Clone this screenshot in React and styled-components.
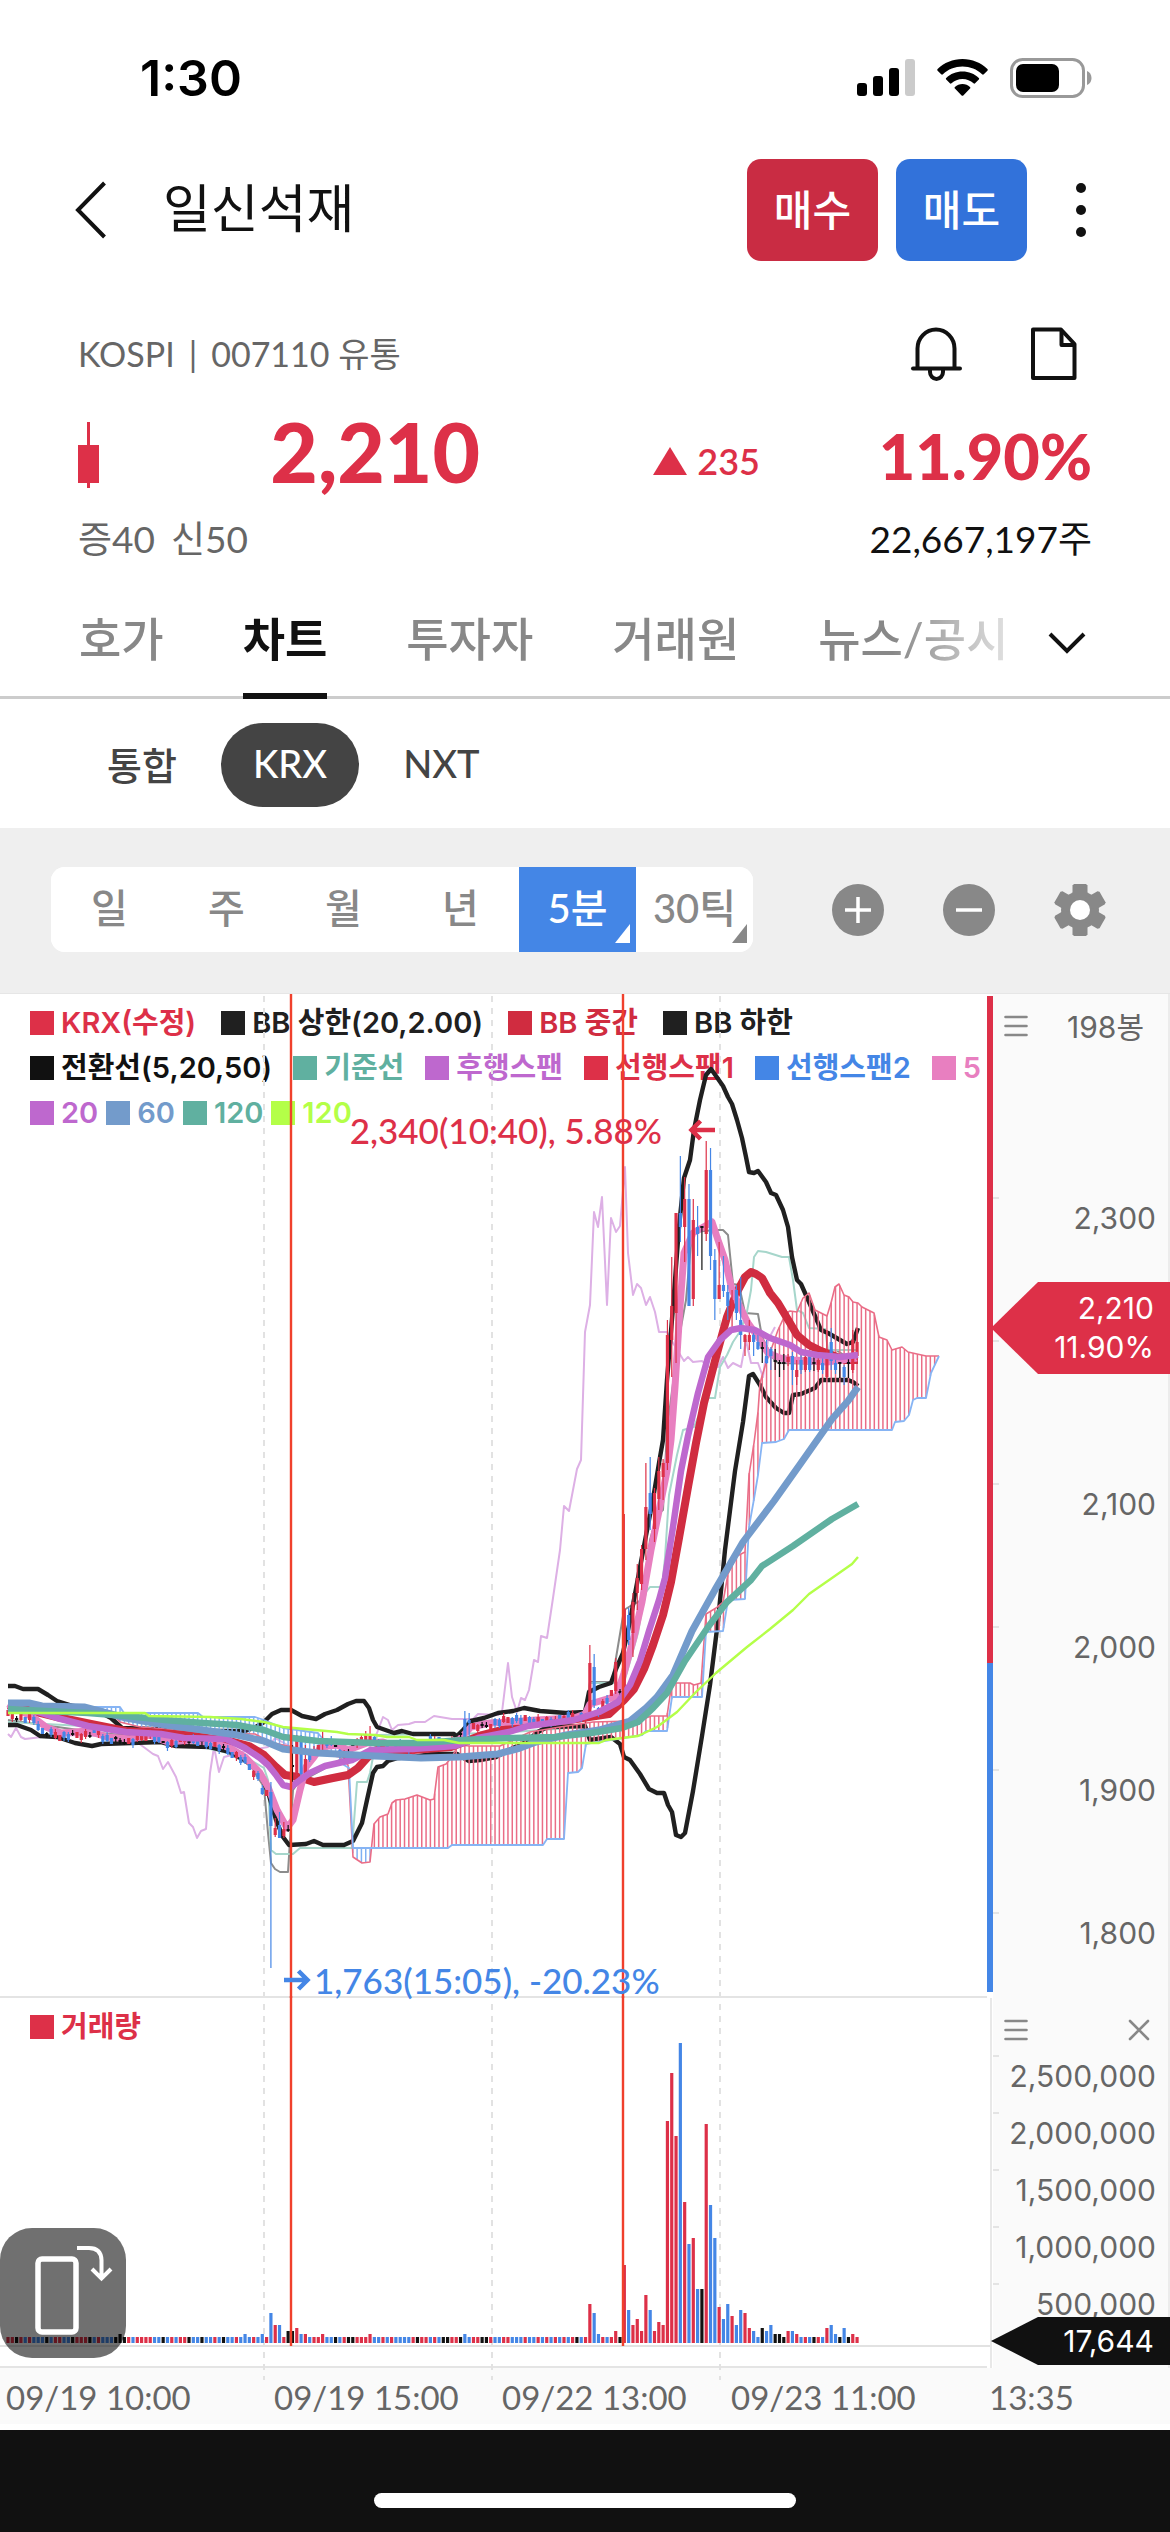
import React, { useState } from "react";
import styled, { createGlobalStyle } from "styled-components";

const RED = "#dd3048";
const BLUE = "#4486e6";
const BLACK = "#111111";
const COLORS = { r: RED, b: BLUE, k: BLACK };

const FIRST_X = 8;
const STEP = 4.31;
const BAR_COUNT = 198;
const barX = (i) => FIRST_X + i * STEP;

const tabs = ["호가", "차트", "투자자", "거래원", "뉴스/공시"];
const exchanges = ["통합", "KRX", "NXT"];
const periods = [
  { label: "일" },
  { label: "주" },
  { label: "월" },
  { label: "년" },
  { label: "5분", more: true },
  { label: "30틱", more: true },
];

const legendRows = [
  {
    gap: 25,
    items: [
      ["KRX(수정)", RED],
      ["BB 상한(20,2.00)", "#202020"],
      ["BB 중간", "#d02c40"],
      ["BB 하한", "#202020"],
    ],
  },
  {
    gap: 21,
    items: [
      ["전환선(5,20,50)", BLACK],
      ["기준선", "#60b0a0"],
      ["후행스팬", "#be68ce"],
      ["선행스팬1", RED],
      ["선행스팬2", BLUE],
      ["5", "#e87fc0"],
    ],
  },
  {
    gap: 8,
    items: [
      ["20", "#be68ce"],
      ["60", "#739bcb"],
      ["120", "#60b0a0"],
      ["120", "#b4ff48"],
    ],
  },
];

// the 2,200 line is where the current price flag sits, so it has no label
const priceTicks = ["2,300", "", "2,100", "2,000", "1,900", "1,800"];
const volumeTicks = ["2,500,000", "2,000,000", "1,500,000", "1,000,000", "500,000"];
const timeLabels = ["09/19 10:00", "09/19 15:00", "09/22 13:00", "09/23 11:00", "13:35"];
const gridLines = [264, 492, 720];
const markers = [291, 623];

// "x,y x,y ..." -> [[x, y], ...]
const parse = (text) => text.trim().split(/\s+/).map((p) => p.split(",").map(Number));

const valueAt = (points, x) => {
  for (let i = 1; i < points.length; i++) {
    if (x <= points[i][0]) {
      const [x0, y0] = points[i - 1];
      const [x1, y1] = points[i];
      return x1 === x0 ? y1 : y0 + ((y1 - y0) * (x - x0)) / (x1 - x0);
    }
  }
  return points[points.length - 1][1];
};

const bbUpper =
  "8,1686 15,1686 23,1689 38,1689 48,1695 57,1701 73,1706 94,1709 111,1718 122,1728 153,1729 165,1728 207,1731 245,1731 254,1728 264,1722 272,1714 281,1710 291,1710 302,1716 316,1719 325,1714 337,1710 348,1704 356,1701 364,1701 369,1708 373,1720 377,1727 394,1733 402,1731 413,1734 454,1734 456,1737 463,1730 471,1721 484,1718 498,1713 513,1711 524,1708 540,1711 566,1713 585,1712 589,1692 599,1687 611,1683 616,1669 623,1653 630,1621 638,1578 644,1546 653,1499 659,1463 663,1440 667,1380 673,1307 679,1227 684,1178 690,1160 694,1130 700,1100 706,1075 711,1069 716,1076 723,1086 728,1097 732,1104 737,1120 742,1138 746,1157 749,1172 754,1173 758,1171 766,1182 771,1193 776,1195 783,1210 788,1227 792,1257 797,1280 801,1284 809,1302 821,1330 828,1333 840,1340 847,1344 853,1342 858,1328";
const bbLower =
  "8,1725 17,1725 31,1730 40,1736 57,1737 75,1743 92,1746 101,1744 161,1742 176,1746 210,1747 230,1752 245,1760 260,1773 268,1792 276,1820 283,1837 289,1845 306,1844 314,1841 323,1845 344,1845 353,1841 362,1823 367,1800 373,1773 377,1767 383,1766 388,1761 398,1758 413,1757 432,1754 457,1754 469,1761 480,1760 496,1757 513,1748 524,1743 538,1732 547,1727 585,1726 590,1740 611,1737 620,1744 624,1757 630,1760 640,1774 649,1789 657,1793 664,1793 668,1805 672,1812 676,1835 681,1837 685,1833 693,1791 702,1736 710,1685 718,1621 725,1550 735,1471 743,1422 749,1376 753,1374 760,1385 766,1397 776,1408 784,1413 789,1413 793,1395 801,1394 815,1388 821,1380 848,1380 853,1382 858,1386";
const bbMiddle =
  "8,1705 57,1717 96,1725 126,1731 161,1733 184,1735 230,1741 249,1746 264,1755 276,1767 285,1775 298,1777 314,1782 333,1778 348,1775 358,1768 367,1758 377,1750 413,1750 451,1747 482,1735 509,1728 536,1723 570,1720 589,1717 609,1714 624,1700 634,1689 644,1669 653,1645 663,1615 671,1582 679,1538 688,1487 696,1443 704,1403 716,1357 727,1317 737,1292 745,1277 751,1272 756,1274 762,1278 770,1293 778,1303 790,1323 797,1335 809,1345 821,1351 832,1355 845,1360 858,1360";
const ma5 =
  "8,1704 34,1718 46,1727 61,1733 88,1731 107,1737 130,1739 149,1735 168,1742 191,1740 214,1743 230,1748 245,1757 260,1773 268,1787 277,1810 287,1828 293,1820 300,1790 306,1767 314,1757 321,1747 337,1745 348,1750 367,1743 383,1742 398,1748 421,1747 444,1743 459,1740 471,1727 490,1723 509,1722 536,1720 574,1718 585,1714 590,1704 607,1699 616,1697 624,1673 634,1637 642,1602 651,1550 659,1511 667,1471 671,1440 675,1387 680,1307 684,1253 693,1233 707,1225 712,1222 718,1240 725,1260 732,1290 740,1307 748,1323 758,1337 768,1353 780,1358 793,1360 827,1362 857,1358";
const ma20 =
  "8,1707 38,1712 57,1718 88,1726 126,1732 161,1734 184,1738 226,1739 245,1748 260,1758 268,1765 276,1775 283,1785 291,1787 300,1780 310,1773 325,1766 352,1760 371,1750 413,1749 455,1746 478,1738 509,1732 528,1726 574,1720 599,1712 618,1702 630,1685 640,1661 649,1631 659,1600 665,1578 673,1527 681,1471 688,1436 698,1393 708,1357 720,1340 731,1330 741,1328 755,1330 770,1338 790,1345 801,1352 817,1355 840,1357 858,1355";
const ma60 =
  "8,1703 29,1703 42,1706 84,1707 126,1718 165,1725 203,1730 237,1735 264,1741 283,1749 318,1753 375,1756 421,1758 459,1757 498,1754 520,1748 536,1742 566,1735 599,1730 630,1721 646,1708 657,1697 673,1675 692,1631 716,1588 743,1542 774,1501 801,1463 832,1419 848,1401 858,1387";
const ma120 =
  "8,1709 46,1711 88,1713 126,1716 165,1720 203,1723 237,1725 264,1730 283,1737 318,1741 375,1743 421,1743 463,1740 513,1738 555,1737 591,1733 622,1728 638,1722 653,1708 667,1693 685,1661 708,1627 727,1602 751,1580 762,1566 793,1546 832,1519 858,1504";
const maLong =
  "8,1713 145,1713 149,1716 210,1717 241,1719 264,1722 283,1727 337,1732 348,1734 375,1735 387,1737 409,1737 417,1740 444,1740 459,1743 599,1743 606,1740 638,1736 657,1727 677,1712 696,1692 716,1673 747,1647 770,1629 793,1610 809,1594 832,1578 852,1564 858,1557";
const lagging =
  "8,1734 11,1737 16,1728 21,1737 25,1739 42,1737 77,1735 115,1737 134,1740 145,1748 153,1754 158,1756 163,1769 168,1762 176,1777 181,1793 184,1792 189,1823 193,1827 197,1838 201,1831 206,1829 210,1773 214,1747 219,1772 224,1757 232,1755 241,1752 268,1747 275,1738 300,1752 344,1757 367,1753 377,1733 383,1717 388,1720 392,1730 398,1725 409,1724 415,1722 425,1722 434,1716 452,1719 473,1719 478,1714 498,1715 502,1712 508,1663 512,1697 517,1712 521,1698 525,1700 529,1690 534,1660 538,1662 541,1636 547,1638 553,1598 560,1550 564,1506 569,1511 577,1469 581,1460 585,1332 590,1305 594,1212 598,1227 602,1197 607,1305 611,1218 616,1232 620,1226 625,1167 628,1253 633,1295 637,1284 641,1288 646,1305 650,1297 655,1312 659,1332 667,1332 673,1343 684,1361 688,1357 693,1362 702,1361 710,1368 718,1367 723,1357 728,1368 733,1363 741,1367 746,1340 751,1363 758,1363 763,1377 768,1340 775,1327";
const baseLine =
  "8,1722 120,1728 245,1757 264,1768 268,1780 271,1850 276,1854 293,1854 300,1848 352,1848 357,1782 367,1782 370,1773 373,1757 377,1735 498,1733 585,1727 590,1683 624,1683 638,1633 641,1615 646,1592 650,1587 662,1587 665,1558 669,1495 677,1455 683,1430 694,1427 706,1398 715,1398 720,1367 727,1355 733,1342 739,1333 746,1317 751,1290 754,1257 758,1251 766,1252 782,1257 789,1257 793,1280 797,1310 803,1313 809,1328 825,1329 828,1350 858,1350";
const conversionLine =
  "8,1720 100,1733 210,1743 250,1765 264,1787 268,1833 271,1863 275,1869 280,1872 288,1872 290,1840 293,1790 298,1783 340,1760 400,1745 456,1742 470,1722 585,1716 590,1682 612,1682 624,1610 632,1605 642,1600 650,1540 657,1515 663,1510 667,1430 676,1360 681,1327 686,1300 692,1232 716,1230 723,1230 728,1235 733,1284 739,1285 745,1313 758,1314 762,1337 772,1357 778,1363 826,1364 828,1350 836,1350 844,1355 858,1358";
const spanA =
  "8,1704 88,1709 110,1711 120,1722 140,1727 165,1729 203,1733 255,1734 270,1742 318,1753 340,1757 348,1765 353,1857 362,1863 370,1862 374,1824 380,1817 388,1814 392,1803 396,1800 405,1799 417,1795 430,1800 434,1799 438,1767 446,1764 452,1757 458,1745 470,1746 500,1746 513,1740 530,1732 560,1727 593,1722 630,1721 646,1718 651,1716 667,1716 671,1689 675,1683 690,1683 694,1685 701,1683 706,1614 716,1608 723,1602 728,1574 737,1556 745,1552 749,1475 754,1443 758,1412 760,1383 766,1363 772,1347 778,1330 786,1313 790,1311 797,1312 803,1298 809,1293 815,1310 827,1316 831,1303 835,1287 839,1284 844,1295 849,1297 853,1302 858,1303 862,1307 874,1313 879,1337 887,1340 892,1350 902,1347 908,1352 926,1356 939,1356";
const spanB =
  "8,1704 88,1707 120,1707 124,1713 198,1713 203,1717 255,1717 264,1720 283,1728 318,1733 322,1738 340,1745 344,1765 349,1768 353,1848 448,1848 452,1845 543,1845 547,1839 564,1839 568,1773 578,1772 582,1768 586,1744 591,1743 630,1737 642,1735 646,1731 667,1731 672,1697 702,1697 706,1632 723,1631 728,1600 745,1599 749,1527 754,1499 758,1475 762,1443 776,1442 784,1439 789,1430 892,1430 895,1422 904,1421 909,1415 913,1400 917,1398 926,1398 931,1373 939,1356";

// up / down / flat for every bar, oldest first
const barColors =
  "rrkrbrbbbkbrrbbkrrrkbrbbbkkkrbrrrrbbkbrbrrkbbkbbrbkbbrbbbrbb" +
  "rbrbrkkrbrbrrrbbkbrkkrrrrbbrbrbbbbrkrrbrbkkrrkbbrrkkrbbrrbbb" +
  "rbbrbrbrbrbrkbrrbbrbrrkrbrrrrbrrr" +
  "rrrbrbrbkrbbrbbrbbrrbbkbbkkkrbrbrbkrbrbbkbkrr";

const closePath = parse(
  "8,1715 20,1718 35,1720 42,1732 60,1736 90,1735 97,1730 105,1739 130,1742 150,1734 160,1742 175,1744 185,1739 200,1743 215,1745 230,1752 243,1760 250,1768 258,1777 262,1790 267,1795 309,1760 314,1752 322,1740 335,1745 345,1757 350,1750 362,1737 375,1742 390,1752 400,1745 415,1752 430,1740 450,1744 460,1738 465,1722 475,1728 490,1725 510,1719 530,1720 550,1722 570,1716 586,1717 600,1708 616,1690"
);

// index: [high, body top, body bottom, low]
const bigCandles = {
  61: [1782, 1792, 1826, 1968], 62: [1818, 1828, 1835, 1837], 63: [1812, 1825, 1838, 1838], 64: [1822, 1829, 1836, 1838],
  65: [1825, 1829, 1831, 1832], 66: [1745, 1765, 1767, 1787], 67: [1735, 1737, 1773, 1776], 68: [1735, 1737, 1774, 1776],
  69: [1745, 1759, 1773, 1775], 73: [1730, 1738, 1744, 1752], 84: [1726, 1735, 1742, 1746], 106: [1711, 1719, 1740, 1744],
  107: [1713, 1720, 1723, 1745], 135: [1645, 1663, 1712, 1714], 136: [1654, 1667, 1705, 1708], 141: [1658, 1662, 1691, 1694],
  143: [1514, 1609, 1690, 1700], 144: [1608, 1615, 1640, 1645], 145: [1593, 1602, 1633, 1657], 146: [1564, 1578, 1593, 1610],
  147: [1545, 1549, 1584, 1590], 148: [1463, 1507, 1549, 1560], 149: [1457, 1493, 1514, 1530], 150: [1488, 1493, 1529, 1542],
  151: [1457, 1471, 1499, 1510], 152: [1459, 1463, 1477, 1500], 153: [1320, 1335, 1463, 1470], 154: [1257, 1306, 1340, 1377],
  155: [1213, 1213, 1313, 1363], 156: [1156, 1213, 1227, 1242], 157: [1177, 1199, 1227, 1262], 158: [1184, 1199, 1306, 1306],
  159: [1199, 1220, 1299, 1306], 160: [1206, 1227, 1234, 1256], 161: [1226, 1226, 1228, 1270], 162: [1141, 1170, 1234, 1241],
  163: [1148, 1170, 1256, 1270], 164: [1249, 1260, 1299, 1320], 165: [1242, 1285, 1299, 1299], 166: [1256, 1285, 1291, 1297],
  167: [1285, 1292, 1306, 1320], 168: [1290, 1300, 1310, 1327], 169: [1285, 1290, 1313, 1320], 170: [1277, 1320, 1335, 1349],
  171: [1334, 1335, 1342, 1356], 172: [1320, 1335, 1342, 1350], 173: [1333, 1335, 1342, 1356], 174: [1335, 1342, 1349, 1350],
  175: [1342, 1347, 1349, 1363], 176: [1340, 1356, 1363, 1364], 177: [1347, 1349, 1356, 1370], 178: [1349, 1360, 1362, 1370],
  179: [1360, 1362, 1364, 1377], 180: [1354, 1362, 1364, 1370], 181: [1354, 1357, 1362, 1366], 182: [1352, 1356, 1370, 1385],
  183: [1360, 1370, 1377, 1385], 184: [1354, 1360, 1370, 1374], 185: [1354, 1357, 1370, 1372], 186: [1352, 1356, 1370, 1372],
  187: [1354, 1362, 1364, 1371], 188: [1358, 1360, 1370, 1372], 189: [1358, 1363, 1370, 1374], 190: [1330, 1357, 1377, 1379],
  191: [1328, 1342, 1361, 1370], 192: [1356, 1363, 1370, 1374], 193: [1362, 1362, 1364, 1378], 194: [1365, 1367, 1377, 1385],
  195: [1356, 1362, 1364, 1378], 196: [1330, 1340, 1370, 1373], 197: [1328, 1342, 1356, 1360],
};

const bigVolumes = {
  26: 9, 55: 9, 59: 9, 61: 30, 62: 18, 63: 18, 65: 12, 66: 12, 67: 15, 68: 9, 69: 9, 73: 9, 84: 9, 106: 9,
  135: 39, 136: 30, 137: 9, 141: 12, 143: 78, 144: 33, 145: 18, 146: 24, 147: 12, 148: 48, 149: 33, 150: 12,
  151: 21, 152: 18, 153: 222, 154: 270, 155: 207, 156: 300, 157: 141, 158: 99, 159: 105, 160: 54, 161: 54,
  162: 219, 163: 138, 164: 105, 165: 36, 166: 24, 167: 39, 168: 27, 169: 18, 170: 33, 171: 30, 172: 15,
  173: 12, 175: 15, 176: 12, 177: 18, 178: 9, 179: 9, 181: 12, 182: 12, 183: 9, 190: 15, 191: 18, 192: 9,
  194: 15, 196: 9,
};

const candles = Array.from({ length: BAR_COUNT }, (_, i) => {
  const color = COLORS[barColors[i]];
  if (bigCandles[i]) return { x: barX(i), color, v: bigCandles[i] };
  const y = Math.round(valueAt(closePath, barX(i))) + ((i * 7) % 5) - 2;
  const half = barColors[i] === "k" ? 1 : 3;
  const wick = (i * 5) % 4;
  return { x: barX(i), color, v: [y - half - wick, y - half, y + half, y + half + ((i * 3) % 4)] };
});

const spanAPoints = parse(spanA);
const spanBPoints = parse(spanB);
const cloud = Array.from({ length: 197 }, (_, i) => {
  const x = barX(i + 19);
  const a = valueAt(spanAPoints, x);
  const b = valueAt(spanBPoints, x);
  return { x, a, b, color: a < b ? "#ea6d87" : "#7fb0f2" };
});

const GridLines = ({ from, to }) => (
  <g>
    {gridLines.map((x) => (
      <path key={x} d={`M${x} ${from}V${to}`} stroke="#e2e2e2" strokeWidth="2" strokeDasharray="6 6" />
    ))}
  </g>
);

const Markers = ({ from, to }) => (
  <g>
    {markers.map((x) => (
      <path key={x} d={`M${x} ${from}V${to}`} stroke="#f0402c" strokeWidth="2.4" />
    ))}
  </g>
);

const PriceChart = () => (
  <ChartSvg viewBox="0 994 987 1002" preserveAspectRatio="none" aria-hidden="true">
    <GridLines from={996} to={1996} />
    <g fill="none" strokeLinejoin="round">
      <polyline points={lagging} stroke="#ddb0e5" strokeWidth="2" />
      <polyline points={conversionLine} stroke="#8c8c8c" strokeWidth="2" />
      <polyline points={baseLine} stroke="#a6d6cb" strokeWidth="2" />
      <polyline points={bbUpper} stroke="#202020" strokeWidth="4.4" />
      <polyline points={bbLower} stroke="#202020" strokeWidth="4.4" />
    </g>
    <g strokeWidth="1.5">
      {cloud.map((c) => (
        <path key={c.x} d={`M${c.x} ${c.a}V${c.b}`} stroke={c.color} />
      ))}
    </g>
    <g fill="none" strokeLinejoin="round">
      <polyline points={spanA} stroke="#ea6d87" strokeWidth="1.6" />
      <polyline points={spanB} stroke="#86b4f4" strokeWidth="1.8" />
      <polyline points={bbMiddle} stroke="#d02c40" strokeWidth="8" />
      <polyline points={ma5} stroke="#e87fc0" strokeWidth="7" />
    </g>
    <g>
      {candles.map(({ x, color, v }) => (
        <g key={x} stroke={color}>
          <path d={`M${x} ${v[0]}V${v[3]}`} strokeWidth="1.2" />
          <path d={`M${x} ${v[1]}V${v[2]}`} strokeWidth="3.2" />
        </g>
      ))}
    </g>
    <g fill="none" strokeLinejoin="round">
      <polyline points={ma20} stroke="#be68ce" strokeWidth="6.5" />
      <polyline points={ma60} stroke="#739bcb" strokeWidth="7" />
      <polyline points={ma120} stroke="#60b0a0" strokeWidth="6.5" />
      <polyline points={maLong} stroke="#b4ff48" strokeWidth="2.4" />
    </g>
    <Markers from={994} to={1998} />
  </ChartSvg>
);

const VolumeChart = () => (
  <ChartSvg viewBox="0 1998 987 368" preserveAspectRatio="none" aria-hidden="true">
    <GridLines from={2004} to={2380} />
    <path d="M0 2346H990" stroke="#e2e2e2" strokeWidth="2" />
    {candles.map(({ x, color }, i) => (
      <path key={x} d={`M${x} 2343v-${bigVolumes[i] || 6}`} stroke={color} strokeWidth="3.2" />
    ))}
    <Markers from={1996} to={2346} />
  </ChartSvg>
);

const MenuIcon = () => (
  <svg width="24" height="22" viewBox="0 0 24 22" stroke="#888" strokeWidth="2.6" strokeLinecap="round">
    <path d="M1.5 2h21M1.5 11h21M1.5 20h21" />
  </svg>
);

const GearIcon = () => (
  <svg width="54" height="54" viewBox="-27 -27 54 54" fill="#888">
    <circle r="19" />
    {[0, 60, 120].map((angle) => (
      <path key={angle} d="M-6-26H6l1.500 1.500v49L6 26H-6l-1.500-1.500v-49z" transform={`rotate(${angle})`} />
    ))}
    <circle r="10" fill="#fff" />
  </svg>
);

const App = () => {
  const [tab, setTab] = useState("차트");
  const [exchange, setExchange] = useState("KRX");
  const [period, setPeriod] = useState("5분");

  return (
    <Page>
      <GlobalStyle />
      <StatusBar>
        <Clock>1:30</Clock>
        <StatusIcons>
          <svg width="58" height="38" viewBox="0 0 58 38">
            <rect x="0" y="24" width="10" height="13" rx="3" />
            <rect x="16" y="17" width="10" height="20" rx="3" />
            <rect x="32" y="9" width="10" height="28" rx="3" />
            <rect x="48" y="0" width="10" height="37" rx="3" fill="#cbcbcb" />
          </svg>
          <svg width="51" height="38" viewBox="0 0 51 38">
            <path d="M25.5 0C35.2 0 44 3.800 50.4 10c.5.500.5 1.200 0 1.700l-3.600 3.600c-.5.500-1.200.5-1.700 0C39.900 10.400 33 7.600 25.500 7.600S11.100 10.400 5.900 15.300c-.5.500-1.200.5-1.700 0L.6 11.700c-.5-.5-.5-1.200 0-1.700C7 3.800 15.800 0 25.500 0z" />
            <path d="M25.5 12.600c6.300 0 12 2.400 16.300 6.300.5.500.5 1.200 0 1.700l-3.700 3.700c-.4.400-1.100.5-1.600 0-2.900-2.600-6.800-4.200-11-4.200s-8.100 1.600-11 4.200c-.5.500-1.200.4-1.600 0l-3.700-3.700c-.5-.5-.5-1.200 0-1.700 4.300-3.900 10-6.300 16.300-6.300z" />
            <path d="M25.5 25.100c2.900 0 5.500 1.100 7.500 2.800.5.500.5 1.200 0 1.700l-6.700 6.800c-.5.500-1.200.5-1.700 0l-6.700-6.800c-.5-.5-.5-1.200 0-1.700 2.100-1.700 4.700-2.800 7.600-2.800z" />
          </svg>
          <svg width="82" height="40" viewBox="0 0 82 40">
            <rect x="1.5" y="1.5" width="72" height="37" rx="11" fill="none" stroke="#999" strokeWidth="3" />
            <rect x="6" y="6" width="43" height="28" rx="7" />
            <path d="M77 13c2.600.8 4.500 3.700 4.500 7s-1.900 6.200-4.500 7z" fill="#999" />
          </svg>
        </StatusIcons>
      </StatusBar>

      <Header>
        <IconButton aria-label="뒤로">
          <svg width="32" height="58" viewBox="0 0 32 58" fill="none" stroke={BLACK} strokeWidth="4">
            <path d="M29.5 2L3 29l26.500 27" />
          </svg>
        </IconButton>
        <Title>일신석재</Title>
        <TradeButton $color="#c92c43">매수</TradeButton>
        <TradeButton $color="#3272da">매도</TradeButton>
        <MoreButton aria-label="더보기">
          <svg width="22" height="56" viewBox="0 0 22 56" fill={BLACK}>
            <circle cx="11" cy="6" r="5" />
            <circle cx="11" cy="28" r="5" />
            <circle cx="11" cy="50" r="5" />
          </svg>
        </MoreButton>
      </Header>

      <MarketRow>
        <MarketInfo>
          <span>KOSPI</span>
          <span>|</span>
          <span>007110 유통</span>
        </MarketInfo>
        <MarketActions>
          <IconButton aria-label="알림">
            <svg width="52" height="56" viewBox="0 0 52 56" fill="none" stroke={BLACK} strokeWidth="4" strokeLinecap="round">
              <path d="M7.5 42V22.500a18.500 19 0 0 1 37 0V42" />
              <path d="M3 42.500h47" />
              <path d="M20 44v2a6.500 7 0 0 0 13 0v-2" />
            </svg>
          </IconButton>
          <IconButton aria-label="메모">
            <svg width="48" height="54" viewBox="0 0 48 54" fill="none" stroke={BLACK} strokeWidth="4" strokeLinejoin="round">
              <path d="M3 2.500h28L44.500 17v34H3z" />
              <path d="M31.5 3v15h13" />
            </svg>
          </IconButton>
        </MarketActions>
      </MarketRow>

      <PriceRow>
        <PriceCell>
          <svg width="22" height="66" viewBox="0 0 22 66" fill={RED}>
            <rect x="9" y="0" width="3" height="66" />
            <rect x="0" y="23" width="21" height="38" />
          </svg>
          <Price>2,210</Price>
        </PriceCell>
        <Change>
          <svg width="34" height="28" viewBox="0 0 34 28" fill={RED}>
            <path d="M17 0l17 28H0z" />
          </svg>
          235
        </Change>
        <Rate>11.90%</Rate>
      </PriceRow>

      <MarginRow>
        <Margins>
          <span>증40</span>
          <span>신50</span>
        </Margins>
        <TotalVolume>22,667,197주</TotalVolume>
      </MarginRow>

      <TabBar>
        <TabList>
          {tabs.map((name) => (
            <Tab key={name} $active={name === tab} onClick={() => setTab(name)}>
              {name}
            </Tab>
          ))}
        </TabList>
        <IconButton aria-label="전체 메뉴">
          <svg width="40" height="24" viewBox="0 0 40 24" fill="none" stroke={BLACK} strokeWidth="4">
            <path d="M3 3l17 17L37 3" />
          </svg>
        </IconButton>
      </TabBar>

      <ExchangeBar>
        {exchanges.map((name) => (
          <ExchangeButton key={name} $active={name === exchange} onClick={() => setExchange(name)}>
            {name}
          </ExchangeButton>
        ))}
      </ExchangeBar>

      <Toolbar>
        <PeriodGroup>
          {periods.map(({ label, more }) => (
            <PeriodButton key={label} $active={label === period} $more={more} onClick={() => setPeriod(label)}>
              {label}
            </PeriodButton>
          ))}
        </PeriodGroup>
        <Tools>
          <IconButton aria-label="확대">
            <svg width="54" height="54" viewBox="0 0 54 54">
              <circle cx="27" cy="27" r="26" fill="#888" />
              <path d="M14 27h26M27 14v26" stroke="#fff" strokeWidth="3.5" />
            </svg>
          </IconButton>
          <IconButton aria-label="축소">
            <svg width="54" height="54" viewBox="0 0 54 54">
              <circle cx="27" cy="27" r="26" fill="#888" />
              <path d="M14 27h26" stroke="#fff" strokeWidth="3.5" />
            </svg>
          </IconButton>
          <IconButton aria-label="설정">
            <GearIcon />
          </IconButton>
        </Tools>
      </Toolbar>

      <Pane>
        <Plot $height={1002}>
          <Legend>
            {legendRows.map((row, i) => (
              <LegendRow key={i} $gap={row.gap}>
                {row.items.map(([name, color], j) => (
                  <LegendItem key={j} $color={color}>
                    {name}
                  </LegendItem>
                ))}
              </LegendRow>
            ))}
          </Legend>
          <PriceChart />
          <HighNote>
            2,340(10:40), 5.88%
            <svg width="27" height="22" viewBox="0 0 27 22" fill="none" stroke={RED} strokeWidth="4.5">
              <path d="M27 11H4M12.5 2L3.500 11l9 9" />
            </svg>
          </HighNote>
          <LowNote>
            <svg width="27" height="22" viewBox="0 0 27 22" fill="none" stroke={BLUE} strokeWidth="4.5">
              <path d="M0 11h23M14.5 2l9 9-9 9" />
            </svg>
            1,763(15:05), -20.23%
          </LowNote>
        </Plot>
        <RangeBar />
        <Axis>
          <AxisHead $height={203}>
            <IconButton aria-label="차트 메뉴">
              <MenuIcon />
            </IconButton>
            <BarTotal>198봉</BarTotal>
          </AxisHead>
          {priceTicks.map((tick, i) => (
            <Tick key={i} $height={143}>
              {tick}
            </Tick>
          ))}
          <PriceFlag>
            <span>2,210</span>
            <span>11.90%</span>
          </PriceFlag>
        </Axis>
      </Pane>

      <Pane>
        <Plot $height={368}>
          <Legend>
            <LegendRow $gap={25}>
              <LegendItem $color={RED}>거래량</LegendItem>
            </LegendRow>
          </Legend>
          <VolumeChart />
          <RotateButton aria-label="가로 화면">
            <svg width="126" height="130" viewBox="0 0 126 130" fill="none" stroke="#fff" strokeWidth="5.5">
              <rect x="38" y="31" width="38" height="73" rx="4" />
              <path d="M77 20h12q12 0 12.500 12v18M92 41l9.500 9.500L111 41" strokeWidth="4" />
            </svg>
          </RotateButton>
        </Plot>
        <AxisLine />
        <Axis>
          <AxisHead $height={57}>
            <IconButton aria-label="거래량 메뉴">
              <MenuIcon />
            </IconButton>
            <IconButton aria-label="닫기">
              <svg width="22" height="22" viewBox="0 0 22 22" stroke="#888" strokeWidth="2.6" strokeLinecap="round">
                <path d="M2 2l18 18M20 2L2 20" />
              </svg>
            </IconButton>
          </AxisHead>
          {volumeTicks.map((tick) => (
            <Tick key={tick} $height={57}>
              {tick}
            </Tick>
          ))}
          <VolumeFlag>17,644</VolumeFlag>
        </Axis>
      </Pane>

      <TimeAxis>
        {timeLabels.map((label) => (
          <span key={label}>{label}</span>
        ))}
      </TimeAxis>

      <HomeArea>
        <HomeIndicator />
      </HomeArea>
    </Page>
  );
};

export default App;

const GlobalStyle = createGlobalStyle`
  * {
    box-sizing: border-box;
  }
  body {
    margin: 0;
    background: #fff;
    font-family: Lato, "Noto Sans CJK KR", sans-serif;
    color: #111;
  }
  button {
    font: inherit;
    color: inherit;
    border: none;
    background: none;
    padding: 0;
    cursor: pointer;
  }
  svg {
    display: block;
  }
`;

const Page = styled.main`
  display: flex;
  flex-direction: column;
  width: 100%;
  overflow: hidden;
`;

const StatusBar = styled.div`
  display: flex;
  align-items: center;
  justify-content: space-between;
  height: 130px;
  padding: 26px 78px 0 140px;
`;

const Clock = styled.span`
  font-family: Inter, sans-serif;
  font-size: 50px;
  font-weight: 600;
  line-height: 60px;
  color: #000;
`;

const StatusIcons = styled.div`
  display: flex;
  align-items: center;
  gap: 22px;
`;

const Header = styled.header`
  display: flex;
  align-items: center;
  height: 160px;
  padding: 0 78px 0 75px;
`;

const IconButton = styled.button`
  display: flex;
  flex: none;
`;

const Title = styled.h1`
  flex: 1;
  margin: 0 0 4px 56px;
  font-size: 52px;
  font-weight: 400;
  line-height: 72px;
`;

const TradeButton = styled.button`
  width: 131px;
  height: 102px;
  margin-left: 18px;
  padding-bottom: 6px;
  border-radius: 14px;
  background: ${(props) => props.$color};
  color: #fff;
  font-size: 42px;
  font-weight: 500;
`;

const MoreButton = styled(IconButton)`
  margin-left: 43px;
`;

const MarketRow = styled.div`
  display: flex;
  align-items: center;
  justify-content: space-between;
  height: 128px;
  padding: 0 78px;
`;

const MarketInfo = styled.div`
  display: flex;
  align-items: baseline;
  gap: 14px;
  padding-bottom: 4px;
  color: #666;
  font-size: 34px;
`;

const MarketActions = styled.div`
  display: flex;
  align-items: center;
  gap: 68px;
  margin-right: 14px;
`;

const PriceRow = styled.div`
  display: grid;
  grid-template-columns: 402fr 280fr 332fr;
  align-items: start;
  height: 72px;
  padding: 0 78px;
  color: ${RED};
  font-weight: 700;
`;

const PriceCell = styled.div`
  display: flex;
  justify-content: space-between;
  padding-top: 4px;
`;

const Price = styled.strong`
  font-size: 82px;
  line-height: 58px;
`;

const Change = styled.span`
  display: flex;
  align-items: baseline;
  justify-content: flex-end;
  gap: 10px;
  font-size: 36px;
  font-weight: 600;
  line-height: 86px;
`;

const Rate = styled.strong`
  font-size: 63px;
  line-height: 76px;
  text-align: right;
`;

const MarginRow = styled.div`
  display: flex;
  align-items: center;
  justify-content: space-between;
  height: 100px;
  padding: 0 78px 6px;
  font-size: 37px;
`;

const Margins = styled.div`
  display: flex;
  gap: 16px;
  color: #666;
`;

const TotalVolume = styled.span`
  color: #111;
`;

const TabBar = styled.nav`
  display: flex;
  align-items: center;
  height: 109px;
  padding: 0 83px 0 79px;
  border-bottom: 3px solid #ccc;
`;

const TabList = styled.div`
  display: flex;
  align-self: stretch;
  flex: 1;
  gap: 79px;
  margin-bottom: -3px;
  overflow: hidden;
  white-space: nowrap;
  mask-image: linear-gradient(to right, #000 84%, transparent 100%);
`;

const Tab = styled.button`
  flex: none;
  padding-bottom: 12px;
  border-bottom: 6px solid ${(props) => (props.$active ? BLACK : "transparent")};
  color: ${(props) => (props.$active ? BLACK : "#888")};
  font-size: 46px;
  font-weight: ${(props) => (props.$active ? 700 : 500)};
`;

const ExchangeBar = styled.div`
  display: flex;
  gap: 12px;
  padding: 24px 75px 21px;
`;

const ExchangeButton = styled.button`
  height: 84px;
  padding: 0 32px 4px;
  border-radius: 42px;
  background: ${(props) => (props.$active ? "#444" : "transparent")};
  color: ${(props) => (props.$active ? "#fff" : "#444")};
  font-size: 38px;
  font-weight: 500;
`;

const Toolbar = styled.div`
  display: flex;
  align-items: center;
  height: 166px;
  padding: 0 63px 2px 51px;
  background: #efefef;
  border-bottom: 1px solid #e6e6e6;
`;

const PeriodGroup = styled.div`
  display: grid;
  grid-template-columns: repeat(6, 1fr);
  flex: 702;
  height: 85px;
  overflow: hidden;
  border-radius: 14px;
  background: #fff;
`;

const PeriodButton = styled.button`
  padding-bottom: 8px;
  background: ${(props) => (props.$active ? BLUE : "#fff")};
  color: ${(props) => (props.$active ? "#fff" : "#888")};
  font-size: 40px;
  font-weight: 500;
  position: relative;

  &::after {
    content: "";
    display: ${(props) => (props.$more ? "block" : "none")};
    position: absolute;
    right: 6px;
    bottom: 9px;
    width: 15px;
    height: 19px;
    background: ${(props) => (props.$active ? "#fff" : "#888")};
    clip-path: polygon(100% 0, 100% 100%, 0 100%);
  }
`;

const Tools = styled.div`
  display: flex;
  flex: 354;
  justify-content: flex-end;
  gap: 57px;
`;

const Pane = styled.section`
  display: grid;
  grid-template-columns: 1fr 6px 177px;
  background: #fff;
`;

const Plot = styled.div`
  display: grid;
  position: relative;
  height: ${(props) => props.$height + 2}px;
  border-bottom: 2px solid #e4e4e4;
`;

const ChartSvg = styled.svg`
  grid-area: 1 / 1;
  width: 100%;
  height: 100%;
  overflow: visible;
  position: relative;
`;

const Legend = styled.div`
  grid-area: 1 / 1;
  padding: 6px 0 0 30px;
  overflow: hidden;
`;

const LegendRow = styled.div`
  display: flex;
  gap: ${(props) => props.$gap}px;
  height: 45px;
`;

const LegendItem = styled.span`
  display: flex;
  align-items: center;
  gap: 7px;
  color: ${(props) => props.$color};
  font-family: Inter, "Noto Sans CJK KR", sans-serif;
  font-size: 29px;
  font-weight: 600;
  line-height: 40px;
  white-space: nowrap;

  &::before {
    content: "";
    width: 24px;
    height: 24px;
    background: ${(props) => props.$color};
  }
`;

const Note = styled.div`
  display: flex;
  align-items: center;
  position: absolute;
  font-size: 35px;
  font-weight: 500;
  line-height: 42px;
  white-space: nowrap;
`;

const HighNote = styled(Note)`
  top: 115px;
  right: 272px;
  gap: 26px;
  color: ${RED};
`;

const LowNote = styled(Note)`
  top: 965px;
  left: 284px;
  gap: 3px;
  color: ${BLUE};
`;

const RangeBar = styled.div`
  margin: 2px 0 6px;
  background: linear-gradient(${RED} 67%, ${BLUE} 67%);
`;

const AxisLine = styled.div`
  width: 2px;
  margin-left: 3px;
  background: #e8e8e8;
`;

const Axis = styled.div`
  position: relative;
  min-height: 0;
  border-right: 2px solid #ececec;
  background: #fafafa;
  color: #666;
  font-family: Inter, "Noto Sans CJK KR", sans-serif;
  font-size: 30px;
`;

const AxisHead = styled.div`
  display: flex;
  align-items: flex-start;
  justify-content: space-between;
  height: ${(props) => props.$height}px;
  padding: 21px 18px 0 11px;
  line-height: 24px;
`;

const BarTotal = styled.span`
  margin-right: 6px;
`;

const Tick = styled.div`
  height: ${(props) => props.$height}px;
  padding: 3px 12px 0 0;
  background: linear-gradient(#e4e4e4, #e4e4e4) no-repeat 0 0 / 6px 2px;
  line-height: 36px;
  text-align: right;

  &:last-of-type {
    height: auto;
  }
`;

const Flag = styled.output`
  display: flex;
  flex-direction: column;
  align-items: flex-end;
  justify-content: center;
  position: absolute;
  left: -2px;
  right: -2px;
  padding-right: 16px;
  color: #fff;
`;

const PriceFlag = styled(Flag)`
  top: 288px;
  height: 92px;
  background: ${RED};
  clip-path: polygon(0 50%, 47px 0, 100% 0, 100% 100%, 47px 100%);
  line-height: 39px;
`;

const VolumeFlag = styled(Flag)`
  top: 319px;
  height: 48px;
  background: ${BLACK};
  clip-path: polygon(0 50%, 47px 0, 100% 0, 100% 100%, 47px 100%);
`;

const RotateButton = styled.button`
  position: absolute;
  left: 0;
  bottom: 8px;
  width: 126px;
  height: 130px;
  border-radius: 32px;
  background: rgba(0, 0, 0, 0.56);
`;

const TimeAxis = styled.div`
  display: grid;
  grid-template-columns: 268fr 228fr 229fr 258fr 181fr;
  height: 56px;
  margin-bottom: 6px;
  padding-left: 6px;
  background: #fafafa;
  color: #666;
  font-size: 33px;
  line-height: 58px;
  white-space: nowrap;
`;

const HomeArea = styled.footer`
  display: flex;
  justify-content: center;
  height: 102px;
  padding-top: 63px;
  background: #111;
`;

const HomeIndicator = styled.div`
  width: 36%;
  height: 15px;
  border-radius: 8px;
  background: #fff;
`;
